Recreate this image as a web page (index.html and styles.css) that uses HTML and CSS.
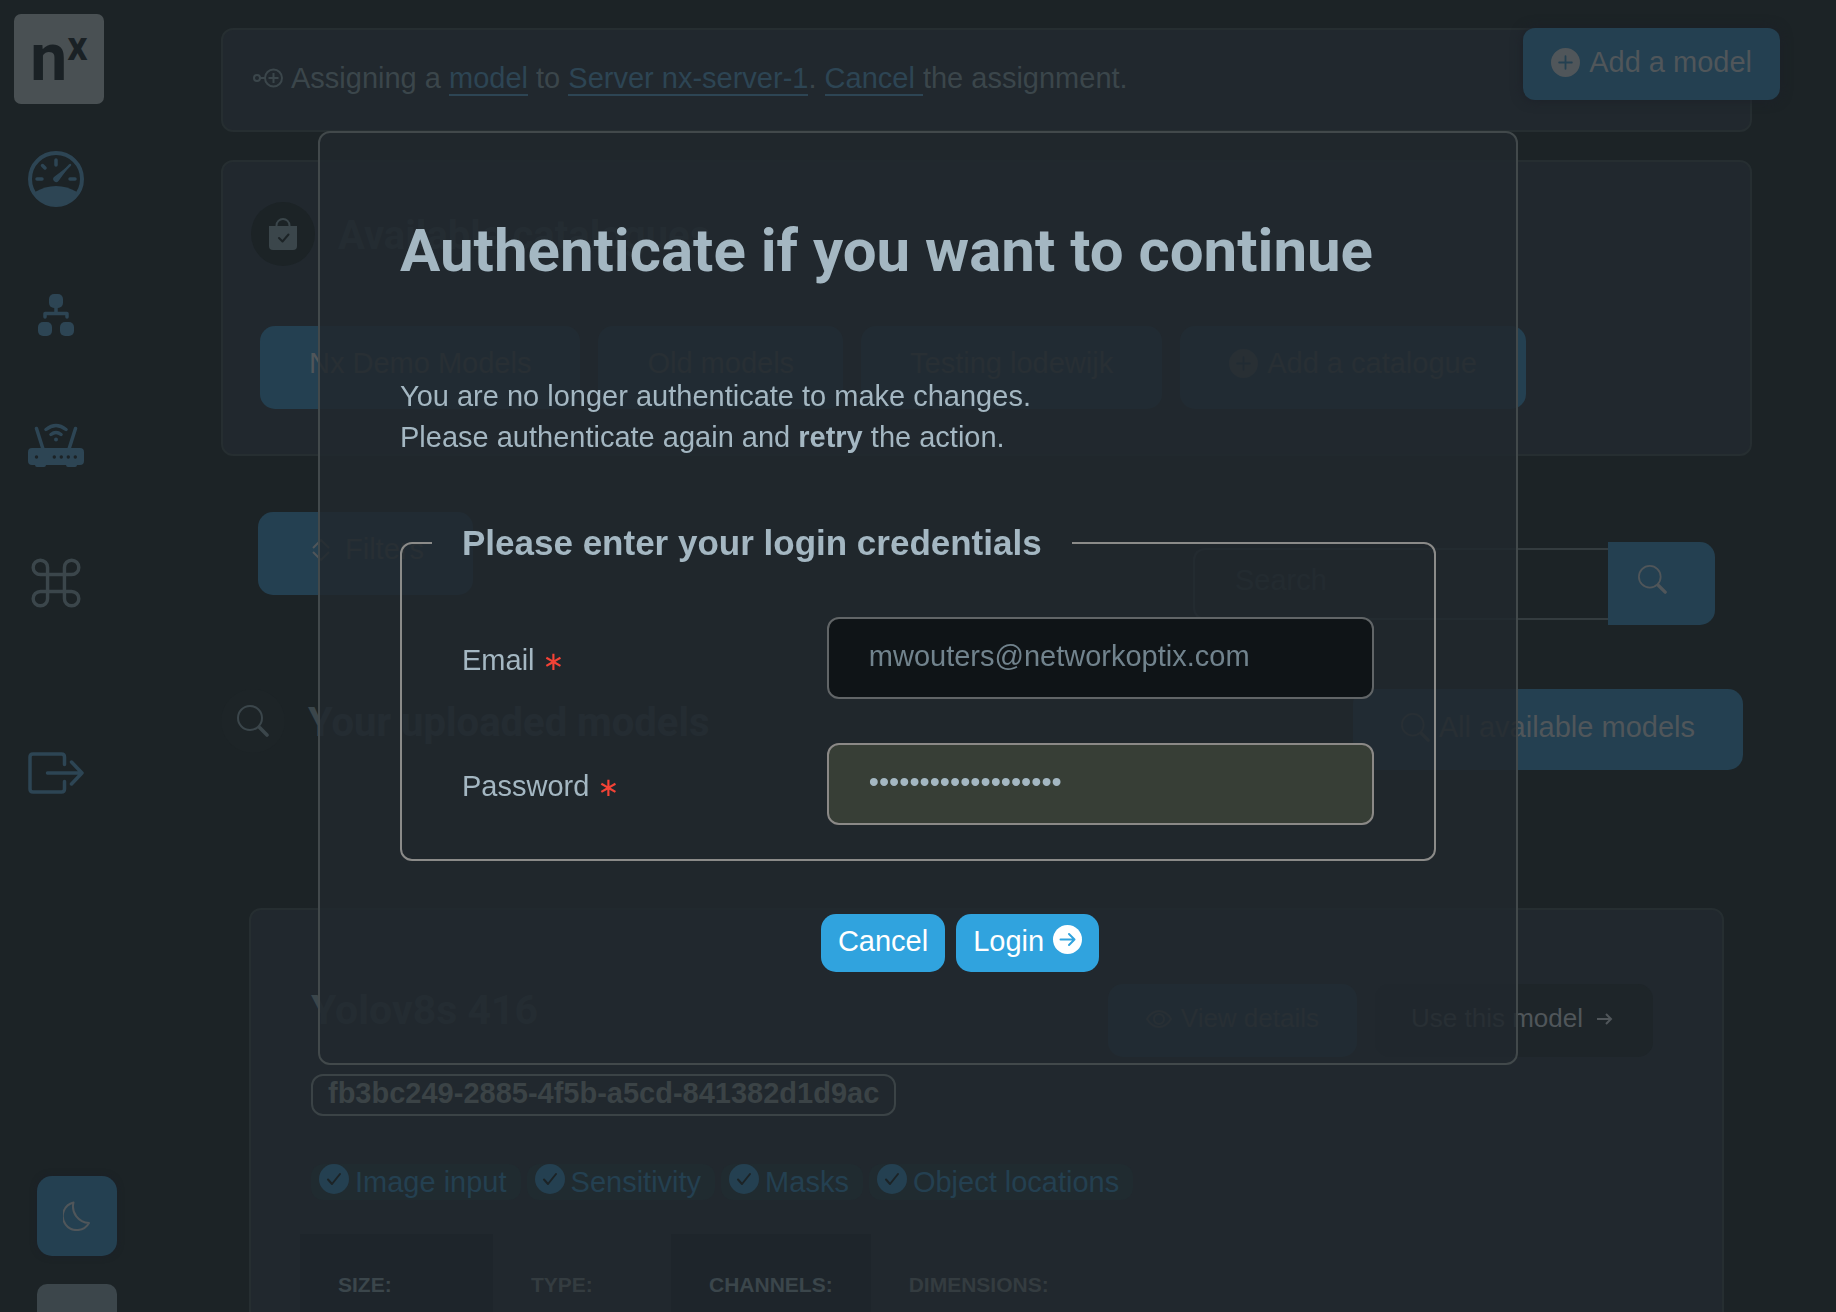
FILE: index.html
```html
<!DOCTYPE html>
<html lang="en">
<head>
<meta charset="utf-8">
<meta name="viewport" content="width=device-width, initial-scale=1">
<title>Nx AI Models</title>
<link rel="stylesheet" href="styles.css">
</head>
<body>
<svg class="sprite" aria-hidden="true">
  <symbol id="search" viewBox="0 0 16 16"><g fill="none" stroke="currentColor" stroke-linecap="round"><circle cx="6.500" cy="6.500" r="6"/><path d="M11.300 11.300l3.700 3.700" stroke-width="1.800"/></g></symbol>
  <symbol id="plus" viewBox="0 0 16 16"><path fill="currentColor" d="M16 8A8 8 0 1 1 0 8a8 8 0 0 1 16 0zM8.5 4.5a.5.5 0 0 0-1 0v3h-3a.5.5 0 0 0 0 1h3v3a.5.5 0 0 0 1 0v-3h3a.5.5 0 0 0 0-1h-3v-3z"/></symbol>
  <symbol id="check" viewBox="0 0 30 30"><circle cx="15" cy="15" r="15" fill="currentColor"/><path class="cut" d="M9 15.500l4 4.500 8-10"/></symbol>
</svg>

<div class="app">
  <aside class="sidebar">
    <a class="logo" href="#" aria-label="Nx home">n<sup>x</sup></a>
    <nav class="nav" aria-label="Main">
      <a href="#" aria-label="Dashboard"><svg width="56" height="56" viewBox="0 0 56 56" fill="none" stroke="currentColor" stroke-width="4" stroke-linecap="round"><circle cx="28" cy="28" r="26"/><path d="M9 28h5M42 28h5M28 9v5M14.500 14.500l2.500 2.500" stroke-width="3.500"/><path d="M43 13L30.500 30a3 3 0 1 1-4.500-4z" fill="currentColor" stroke="none"/><path d="M42 14L28.500 28" stroke-width="2.500"/><path d="M7 41Q17 35 28 35T49 41Q41 55 28 55T7 41z" fill="currentColor" stroke="none"/></svg></a>
      <a href="#" aria-label="Network"><svg width="36" height="42" viewBox="0 0 36 42" fill="currentColor"><rect x="11" width="14" height="14" rx="5"/><rect y="28" width="14" height="14" rx="5"/><rect x="22" y="28" width="14" height="14" rx="5"/><path d="M18 13v6M7 23v-3.500h22V23" fill="none" stroke="currentColor" stroke-width="3.500" stroke-linecap="round" stroke-linejoin="round"/></svg></a>
      <a href="#" aria-label="Devices"><svg width="56" height="44" viewBox="0 0 56 44" fill="none" stroke="currentColor" stroke-width="3.500" stroke-linecap="round"><path d="M8.500 5.500L15 26M47.500 5.500L41 26M18 6.500q10-8 20 0M23 11.500q5-4 10 0"/><circle cx="28" cy="16.500" r="2" fill="currentColor" stroke="none"/><path fill="currentColor" stroke="none" fill-rule="evenodd" d="M4 25h48q4 0 4 4v9q0 4-4 4h-3q0 2-2 2h-7q-2 0-2-2H18q0 2-2 2H9q-2 0-2-2H4q-4 0-4-4v-9q0-4 4-4z"/><g class="hole"><circle cx="8.500" cy="34" r="1.700"/><circle cx="26.300" cy="34" r="1.700"/><circle cx="33.300" cy="34" r="1.700"/><circle cx="40.300" cy="34" r="1.700"/><circle cx="47.300" cy="34" r="1.700"/></g></svg></a>
      <a class="grey" href="#" aria-label="Shortcuts"><svg width="50" height="50" viewBox="0 0 16 16"><path d="M5.300 3A2.300 2.300 0 1 0 3 5.300h10A2.300 2.300 0 1 0 10.700 3v10A2.300 2.300 0 1 0 13 10.700H3A2.300 2.300 0 1 0 5.300 13z" fill="none" stroke="currentColor" stroke-width="1.100"/></svg></a>
      <a class="exit" href="#" aria-label="Log out"><svg width="56" height="42" viewBox="0 0 56 42" fill="none" stroke="currentColor" stroke-width="3.500" stroke-linecap="round" stroke-linejoin="round"><path d="M36.500 12.500V5q0-3-3-3H5Q2 2 2 5v32q0 3 3 3h28.500q3 0 3-3v-7.500M19.500 21H54M43.500 10L54 21 43.500 32"/></svg></a>
    </nav>
    <div class="tools">
      <button class="tile moon" type="button" aria-label="Dark mode"><svg width="28" height="30" viewBox="0 0 28 30" fill="none" stroke="currentColor" stroke-width="2" stroke-linejoin="round"><path d="M10.500 1.500A14 14 0 1 0 26 22 A16.500 16.500 0 0 1 10.500 1.500z"/></svg></button>
      <button class="tile plain" type="button" aria-label="More"></button>
    </div>
  </aside>

  <main class="main">
    <section class="panel notice">
      <svg width="30" height="20" viewBox="0 0 30 20" fill="none" stroke="currentColor" stroke-width="2"><circle cx="4" cy="10" r="3"/><circle cx="20.500" cy="10" r="8.500"/><path d="M7 10h5M15.500 10h10M20.500 5v10"/></svg>
      <p>Assigning a <a href="#">model</a> to <a href="#">Server nx-server-1</a>. <a href="#">Cancel&nbsp;</a>the assignment.</p>
    </section>

    <section class="panel catalogues">
      <header class="title-row">
        <span class="disc"><svg width="28" height="32" viewBox="0 0 28 32"><path fill="currentColor" d="M0 8h28v20q0 4-4 4H4q-4 0-4-4z"/><path d="M7.500 9V7.500a6.500 6.500 0 0 1 13 0V9" fill="none" stroke="currentColor" stroke-width="2"/><path class="cut" d="M10 20l3.500 3.500 6-7"/></svg></span>
        <h2>Available catalogues</h2>
      </header>
      <div class="tabs">
        <button class="btn tall" type="button">Nx Demo Models</button>
        <button class="btn tall" type="button">Old models</button>
        <button class="btn tall" type="button">Testing lodewijk</button>
        <button class="btn tall" type="button"><svg class="i29"><use href="#plus"/></svg>Add a catalogue</button>
      </div>
    </section>

    <div class="toolbar">
      <button class="btn tall filters" type="button"><svg width="18" height="22" viewBox="0 0 18 22" fill="none" stroke="currentColor" stroke-width="2"><path d="M1 9l8-8 8 8M1 13l8 8 8-8"/></svg>Filters</button>
      <form class="search">
        <input type="search" placeholder="Search" aria-label="Search">
        <button class="btn" type="button" aria-label="Search"><svg class="i29"><use href="#search"/></svg></button>
      </form>
    </div>

    <header class="title-row uploaded">
      <span class="disc faint"><svg class="i32"><use href="#search"/></svg></span>
      <h2>Your uploaded models</h2>
      <button class="btn all" type="button"><svg class="i29"><use href="#search"/></svg>All available models</button>
    </header>

    <article class="panel model">
      <header class="model-head">
        <h3>Yolov8s 416</h3>
        <button class="btn small" type="button"><svg width="26" height="18" viewBox="0 0 26 18" fill="none" stroke="currentColor" stroke-width="2"><path d="M1 9q5-8 12-8t12 8q-5 8-12 8T1 9z"/><circle cx="13" cy="9" r="5"/></svg>View details</button>
        <button class="btn small dark" type="button">Use this model<svg width="16" height="14" viewBox="0 0 16 14" fill="none" stroke="currentColor" stroke-width="2"><path d="M0 7h14M9 2l5 5-5 5"/></svg></button>
      </header>
      <span class="uuid">fb3bc249-2885-4f5b-a5cd-841382d1d9ac</span>
      <ul class="chips">
        <li><svg class="i30"><use href="#check"/></svg>Image input</li>
        <li><svg class="i30"><use href="#check"/></svg>Sensitivity</li>
        <li><svg class="i30"><use href="#check"/></svg>Masks</li>
        <li><svg class="i30"><use href="#check"/></svg>Object locations</li>
      </ul>
      <table class="specs">
        <thead><tr><th scope="col">SIZE:</th><th scope="col">TYPE:</th><th scope="col">CHANNELS:</th><th scope="col">DIMENSIONS:</th></tr></thead>
      </table>
    </article>
  </main>
  <button class="btn add" type="button"><svg class="i29"><use href="#plus"/></svg>Add a model</button>
</div>

<div class="overlay">
  <div class="modal" role="dialog" aria-modal="true" aria-labelledby="auth-title">
    <h1 id="auth-title">Authenticate if you want to continue</h1>
    <p>You are no longer authenticate to make changes.<br>Please authenticate again and <strong>retry</strong> the action.</p>
    <form>
      <fieldset>
        <legend>Please enter your login credentials</legend>
        <div class="field">
          <label for="email">Email <span class="req">∗</span></label>
          <input id="email" class="email" type="email" value="mwouters@networkoptix.com">
        </div>
        <div class="field">
          <label for="password">Password <span class="req">∗</span></label>
          <input id="password" class="password" type="password" value="correcthorsebattery">
        </div>
      </fieldset>
      <div class="actions">
        <button type="button">Cancel</button>
        <button type="button">Login<svg width="29" height="29" viewBox="0 0 29 29"><circle cx="14.500" cy="14.500" r="14.500" fill="currentColor"/><path class="arrow" d="M7.500 14.500h14M16 9l5.500 5.500L16 20"/></svg></button>
      </div>
    </form>
  </div>
</div>
</body>
</html>
```
FILE: styles.css
```css
:root {
  --page: #1c2326;
  --panel: #21282e;
  --line: #262e31;
  --muted: #3b464b;
  --link: #2d4554;
  --blue: #244051;
  --on-blue: #50565a;
  --bright: #a4b7c2;
}

* { box-sizing: border-box; }

body {
  margin: 0;
  background: var(--page);
  color: var(--muted);
  font: 29px/41px "Liberation Sans", Arial, sans-serif;
}

h1, h2, h3, p, ul, fieldset { margin: 0; padding: 0; }
h1, h2, h3 { font-family: Roboto, sans-serif; font-weight: 700; }
svg { display: block; flex: none; }
button, input { font: inherit; color: inherit; }
button { cursor: pointer; border: 0; }

.sprite { position: absolute; width: 0; height: 0; }
.i29 { width: 29px; height: 29px; }
.i30 { width: 30px; height: 30px; }
.i32 { width: 32px; height: 32px; }
.cut { fill: none; stroke: var(--page); stroke-width: 2; stroke-linecap: round; stroke-linejoin: round; }
.hole { fill: var(--page); stroke: none; }

.app { position: relative; display: flex; height: 100vh; overflow: hidden; }

/* Sidebar */
.sidebar { flex: none; width: 221px; padding: 14px; display: flex; flex-direction: column; }
.logo {
  flex: none;
  width: 90px;
  height: 90px;
  display: flex;
  align-items: flex-start;
  justify-content: center;
  border-radius: 7px;
  background: #495053;
  color: #1a2125;
  font: 700 66px/88px Roboto, sans-serif;
  text-decoration: none;
}
.logo sup { font-size: 40px; line-height: 65px; }
.nav { width: 84px; margin-top: 47px; display: flex; flex-direction: column; align-items: center; gap: 87px; color: var(--link); }
.nav a { color: inherit; }
.nav .grey { color: var(--muted); margin-top: 4px; }
.nav .exit { margin-top: 57px; }
.tools { margin: auto 0 -66px 23px; display: flex; flex-direction: column; gap: 28px; }
.tile { width: 80px; height: 80px; padding: 0; border-radius: 15px; }
.moon { display: grid; place-items: center; background: var(--blue); color: var(--on-blue); box-shadow: 0 0 6px #1c2028; }
.plain { background: #3c464b; border-radius: 10px; }

/* Page content */
.main { flex: 1; min-width: 0; padding: 28px 84px 0 0; }
.panel { background: var(--panel); border: 2px solid var(--line); border-radius: 12px; }
.notice { display: flex; align-items: center; gap: 8px; height: 104px; padding: 0 30px 4px; }
.notice a { color: var(--link); text-decoration: none; border-bottom: 2px solid var(--link); }
.catalogues { margin-top: 28px; padding: 40px 28px 45px; }

.title-row { display: flex; align-items: flex-start; gap: 23px; }
.title-row h2 { font-size: 40px; line-height: 68px; }
.disc { flex: none; display: grid; place-items: center; width: 64px; height: 64px; border-radius: 50%; background: #1c2326; }
.faint { background: #1d2427; }

.btn {
  display: flex;
  align-items: center;
  justify-content: center;
  gap: 9px;
  padding: 0 48px 4px;
  border-radius: 15px;
  background: var(--blue);
  color: var(--on-blue);
  white-space: nowrap;
}
.tall { height: 83px; padding: 0 49px 8px; }
.tabs { display: flex; gap: 18px; margin: 56px 0 0 9px; }

.toolbar { display: flex; justify-content: space-between; align-items: flex-start; margin-top: 56px; padding: 0 37px; }
.filters { gap: 15px; padding-left: 54px; }
.search { display: flex; align-items: center; margin-top: 30px; }
.search input {
  width: 415px;
  height: 72px;
  padding: 0 40px 6px;
  background: var(--page);
  border: 2px solid #343c3f;
  border-right: 0;
  border-radius: 12px 0 0 12px;
}
.search input::placeholder { color: #343d41; opacity: 1; }
.search .btn { width: 107px; height: 83px; padding: 0 18px 8px 0; border-radius: 0 15px 15px 0; }

.uploaded { margin-top: 64px; }
.all { height: 81px; margin: 0 9px 0 auto; }

.model { margin: 138px 28px 0; padding: 74px 69px 60px 60px; }
.model-head { display: flex; gap: 18px; }
.model-head h3 { flex: 1; font-size: 41px; line-height: 52px; }
.small { height: 73px; padding: 0 38px 4px; font-size: 26px; }
.dark { gap: 14px; padding: 0 40px 4px 36px; background: #1e2529; }
.uuid {
  display: inline-block;
  margin-top: 17px;
  padding: 0 15px 4px;
  border: 2px solid #3b4346;
  border-radius: 12px;
  color: #3b4346;
  font-weight: 700;
  line-height: 34px;
}
.chips { display: flex; gap: 6px; margin-top: 48px; list-style: none; color: var(--blue); }
.chips li { display: flex; align-items: center; gap: 6px; height: 36px; padding: 0 14px 0 8px; border-radius: 12px; background: #202b30; white-space: nowrap; }
.chips svg { margin-bottom: 6px; }
.specs { margin: 34px 0 0 -11px; border-collapse: collapse; font-size: 21px; }
.specs th { padding: 36px 38px 60px; text-align: left; line-height: 30px; color: #343c40; }
.specs th:nth-child(odd) { background: #1e252b; color: var(--muted); }
.specs th:nth-child(1) { min-width: 193px; }
.specs th:nth-child(2) { min-width: 178px; }

.add { position: absolute; top: 28px; right: 56px; height: 72px; padding: 0 28px 4px; border-radius: 12px; box-shadow: 0 0 12px #1c2028; }

/* Sign-in dialog */
.overlay { position: fixed; inset: 0; padding-top: 10vh; overflow: auto; }
.modal {
  width: 100%;
  max-width: 1200px;
  margin: 0 auto;
  padding: 80px 80px 91px;
  border: 2px solid #42494b;
  border-radius: 12px;
  background: rgba(33, 40, 46, .85);
  color: var(--bright);
}
.modal h1 { font-size: 60px; line-height: 76px; }
.modal p { margin-top: 87px; }
fieldset { min-width: 0; margin-top: 65px; padding: 54px 30px 34px; border: 2px solid #8b8b89; border-radius: 12px; }
legend { padding: 0 30px; font-size: 35px; font-weight: 700; line-height: 40px; }
.field { display: grid; grid-template-columns: 2fr 3fr; align-items: center; padding: 0 30px; }
.field + .field { margin-top: 44px; }
.field label { padding-top: 4px; }
.field input { width: 100%; min-width: 0; height: 82px; padding: 0 40px 4px; border: 2px solid #8b8987; border-radius: 12px; }
.field .email { background: #0f1417; border-color: #616567; color: #71838d; }
.field .password { background: #373e36; }
.req { color: #f44336; font: 26px/30px "DejaVu Sans", sans-serif; }
.actions { display: flex; justify-content: center; gap: 11px; margin-top: 53px; padding-left: 84px; }
.actions button { display: flex; align-items: center; gap: 9px; height: 58px; padding: 0 17px 4px; border-radius: 15px; background: #30a3de; color: #fff; }
.actions svg { margin-bottom: 4px; }
.arrow { fill: none; stroke: #30a3de; stroke-width: 2; stroke-linecap: round; stroke-linejoin: round; }
```
